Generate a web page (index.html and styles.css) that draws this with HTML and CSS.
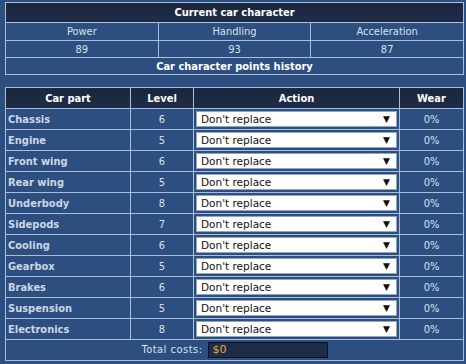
FILE: index.html
```html
<!DOCTYPE html>
<html>
<head>
<meta charset="utf-8">
<link rel="stylesheet" href="styles.css">
</head>
<body>
<div class="page">
  <table class="char">
    <tr class="head"><th colspan="3">Current car character</th></tr>
    <tr class="lbl"><td>Power</td><td>Handling</td><td>Acceleration</td></tr>
    <tr class="val"><td>89</td><td>93</td><td>87</td></tr>
    <tr class="hist"><th colspan="3">Car character points history</th></tr>
  </table>

  <table class="parts">
    <colgroup><col class="c1"><col class="c2"><col class="c3"><col class="c4"></colgroup>
    <tr class="head"><th>Car part</th><th>Level</th><th>Action</th><th>Wear</th></tr>
    <tr><td class="name">Chassis</td><td class="num">6</td><td class="act"><div class="sel"><span>Don't replace</span><i>▼</i></div></td><td class="num">0%</td></tr>
    <tr><td class="name">Engine</td><td class="num">5</td><td class="act"><div class="sel"><span>Don't replace</span><i>▼</i></div></td><td class="num">0%</td></tr>
    <tr><td class="name">Front wing</td><td class="num">6</td><td class="act"><div class="sel"><span>Don't replace</span><i>▼</i></div></td><td class="num">0%</td></tr>
    <tr><td class="name">Rear wing</td><td class="num">5</td><td class="act"><div class="sel"><span>Don't replace</span><i>▼</i></div></td><td class="num">0%</td></tr>
    <tr><td class="name">Underbody</td><td class="num">8</td><td class="act"><div class="sel"><span>Don't replace</span><i>▼</i></div></td><td class="num">0%</td></tr>
    <tr><td class="name">Sidepods</td><td class="num">7</td><td class="act"><div class="sel"><span>Don't replace</span><i>▼</i></div></td><td class="num">0%</td></tr>
    <tr><td class="name">Cooling</td><td class="num">6</td><td class="act"><div class="sel"><span>Don't replace</span><i>▼</i></div></td><td class="num">0%</td></tr>
    <tr><td class="name">Gearbox</td><td class="num">5</td><td class="act"><div class="sel"><span>Don't replace</span><i>▼</i></div></td><td class="num">0%</td></tr>
    <tr><td class="name">Brakes</td><td class="num">6</td><td class="act"><div class="sel"><span>Don't replace</span><i>▼</i></div></td><td class="num">0%</td></tr>
    <tr><td class="name">Suspension</td><td class="num">5</td><td class="act"><div class="sel"><span>Don't replace</span><i>▼</i></div></td><td class="num">0%</td></tr>
    <tr><td class="name">Electronics</td><td class="num">8</td><td class="act"><div class="sel"><span>Don't replace</span><i>▼</i></div></td><td class="num">0%</td></tr>
    <tr class="total"><td colspan="4"><span class="tl">Total costs:</span><span class="tin">$0</span></td></tr>
  </table>
</div>
</body>
</html>
```

FILE: styles.css
```css
html, body {
  margin: 0;
  padding: 0;
  background: #2d4f7f;
}
body {
  font-family: "DejaVu Sans Condensed", "DejaVu Sans", sans-serif;
  font-size: 11px;
  color: #d8e1ec;
}
.page {
  padding: 2px 2px 0 5px;
}
table {
  width: 459px;
  border-collapse: collapse;
  border: 1px solid #a8bfdf;
}
td, th {
  border: 1px solid #a8bfdf;
  padding: 0;
  text-align: center;
  vertical-align: middle;
}
th {
  color: #ffffff;
  font-weight: bold;
}
.char .head th {
  height: 19px;
  background: linear-gradient(#1a263d, #1e2d48);
}
.char .lbl td { height: 17px; width: 33.3%; }
.char .val td { height: 16px; }
.char .hist th { height: 16px; }

.parts {
  margin-top: 12px;
  table-layout: fixed;
}
.c1 { width: 125px; }
.c2 { width: 63px; }
.c3 { width: 206px; }
.c4 { width: 64px; }
.parts .head th {
  height: 20px;
  background: linear-gradient(#1a263d, #1e2d48);
}
.parts td { height: 20px; }
.parts td.name {
  text-align: left;
  padding-left: 2px;
  font-weight: bold;
  color: #ccd6e5;
}
.act { padding: 0 2px 0 2px; }
.sel {
  display: flex;
  align-items: center;
  justify-content: space-between;
  height: 14px;
  background: #ffffff;
  border: 1px solid #8fa5c4;
  color: #101010;
  padding: 0 6px 0 4px;
  text-align: left;
  font-family: "DejaVu Sans", sans-serif;
  font-size: 10.5px;
}
.sel i {
  font-style: normal;
  font-size: 9px;
}
.total td {
  height: 20px;
}
.tl {
  margin-right: 5px;
  letter-spacing: 0.5px;
}
.tin {
  display: inline-block;
  width: 114px;
  height: 14px;
  line-height: 14px;
  text-align: left;
  padding-left: 4px;
  background: #1d2c47;
  border: 1px solid #0a1220;
  color: #eea634;
  vertical-align: middle;
  font-family: "DejaVu Sans", sans-serif;
}
```
